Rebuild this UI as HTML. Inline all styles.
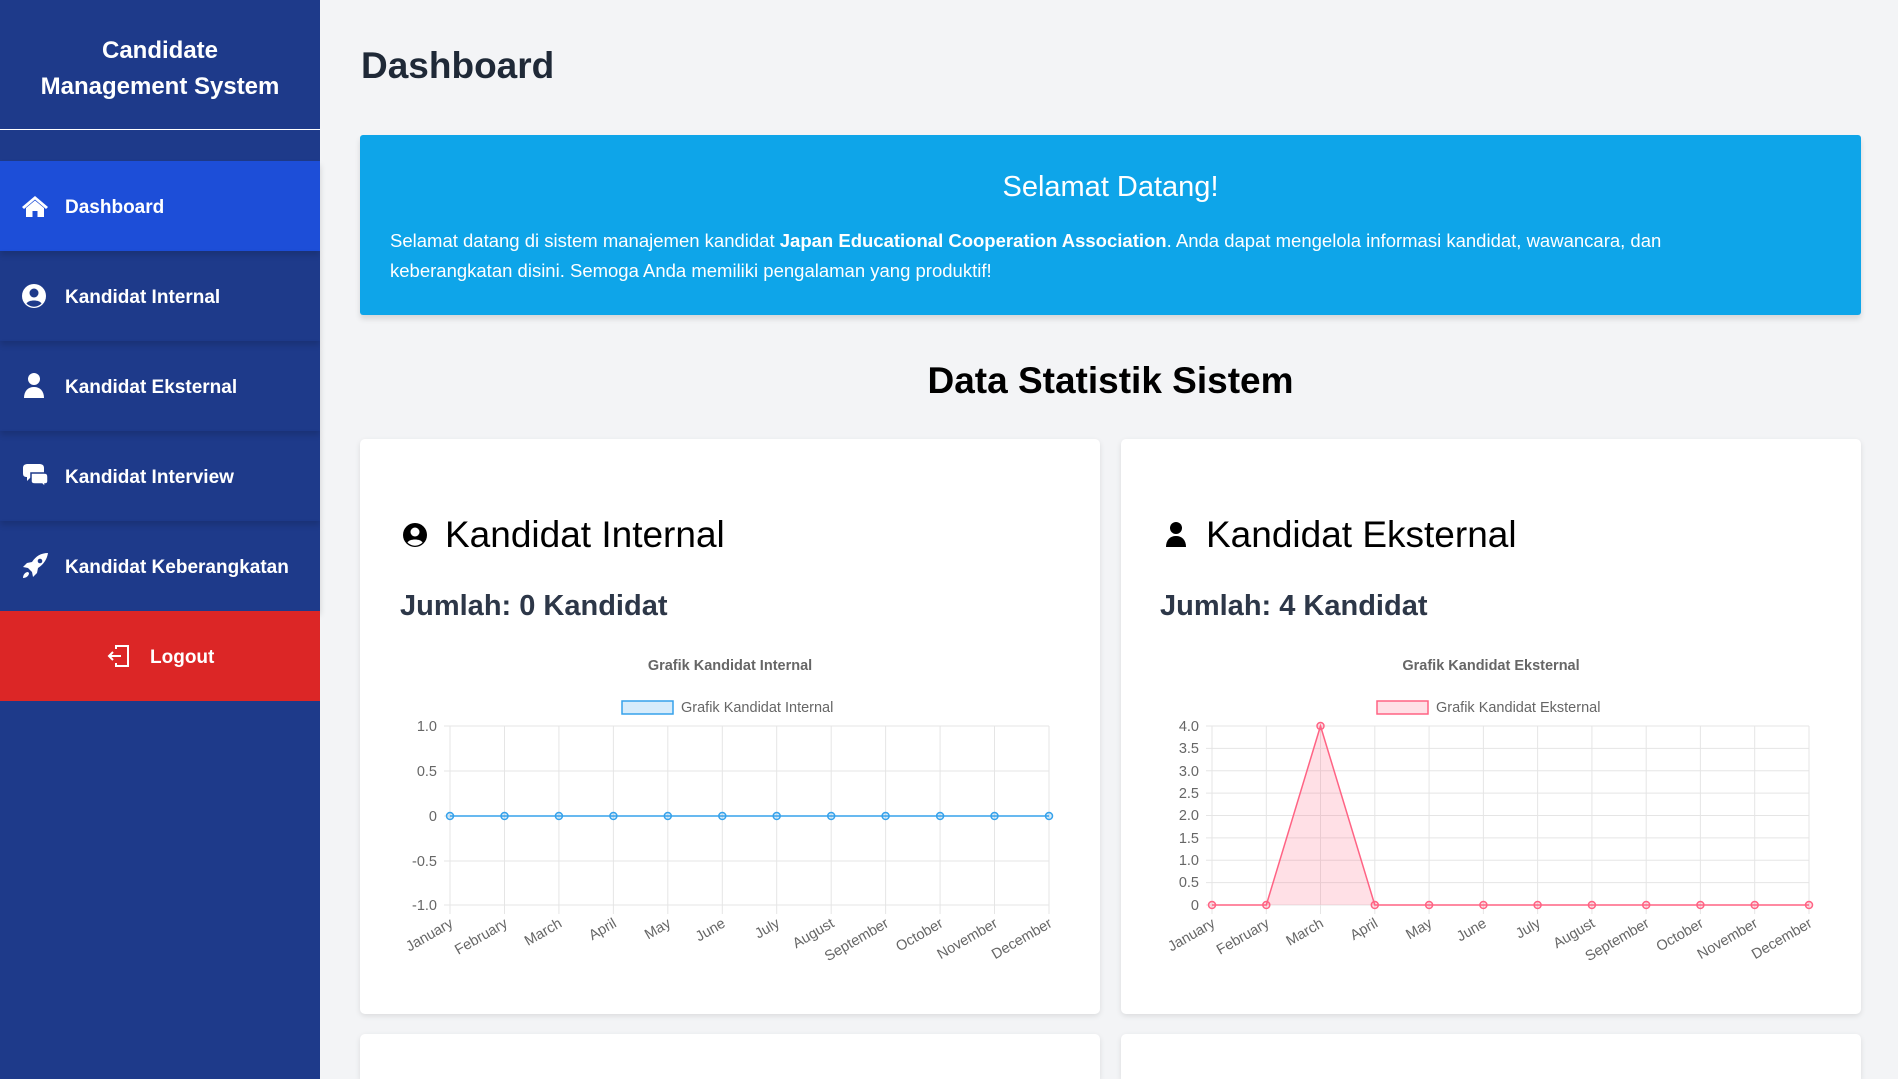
<!DOCTYPE html>
<html><head><meta charset="utf-8"><style>
*{margin:0;padding:0;box-sizing:border-box}
html,body{width:1898px;height:1079px;overflow:hidden}
body{background:#f3f4f6;font-family:"Liberation Sans",sans-serif;position:relative}
.sb{position:absolute;left:0;top:0;width:320px;height:1079px;background:#1e3a8a}
.sb h1{position:absolute;top:33px;left:0;width:320px;text-align:center;color:#fff;font-size:24px;line-height:36px;font-weight:bold}
.div{position:absolute;top:129px;left:0;width:320px;height:1px;background:#fff}
.it{position:absolute;left:0;width:320px;height:90px;display:flex;align-items:center;color:#fff;font-size:19px;font-weight:bold;box-shadow:0 4px 6px rgba(0,0,0,.15)}
.it svg{position:absolute;left:21px}
.it span{position:absolute;left:65px;top:36px}
.a{position:absolute}
</style></head><body>
<div class="sb">
<h1>Candidate<br>Management System</h1>
<div class="div"></div>
<div class="it" style="top:161px;background:#1d4ed8"><svg width="28" height="24" viewBox="0 0 28 24"><path d="M14 2L1 13l2 2 11-9.5L25 15l2-2z" fill="#fff"/><path d="M5 14l9-7.5 9 7.5v9h-6.5v-6h-5v6H5z" fill="#fff"/></svg><span>Dashboard</span></div>
<div class="it" style="top:251px"><svg width="26" height="26" viewBox="0 0 26 26"><circle cx="13" cy="13" r="12" fill="#fff"/><circle cx="13" cy="10" r="4.5" fill="#1e3a8a"/><path d="M5.5 20.5c2-4 13-4 15 0-2 2-5 3.2-7.5 3.2s-5.5-1.2-7.5-3.2z" fill="#1e3a8a"/></svg><span>Kandidat Internal</span></div>
<div class="it" style="top:341px"><svg width="26" height="28" viewBox="0 0 26 28"><circle cx="13" cy="7" r="6" fill="#fff"/><path d="M3 26c0-7 4-11 10-11s10 4 10 11z" fill="#fff"/></svg><span>Kandidat Eksternal</span></div>
<div class="it" style="top:431px"><svg width="28" height="26" viewBox="0 0 28 26"><path d="M2 5c0-3 2-4 5-4h11c3 0 5 1 5 4v5c0 3-2 4-5 4H10l-4 4v-4c-3 0-4-1-4-4z" fill="#fff"/><path d="M10 10h13c3 0 4 1 4 4v4c0 2-1 3-3 3v3l-3-3h-7c-3 0-4-1-4-3z" fill="#fff" stroke="#1e3a8a" stroke-width="1.5"/></svg><span>Kandidat Interview</span></div>
<div class="it" style="top:521px"><svg width="28" height="28" viewBox="0 0 28 28"><path d="M27 1c-7 0-12 3-16 9l-5 1-4 4 5 1 4 4 1 5 4-4 1-5c6-4 9-9 10-15z" fill="#fff"/><circle cx="19" cy="9" r="2.3" fill="#1e3a8a"/><path d="M7 20c-3 0-5 3-5 6 3 0 6-2 6-5z" fill="#fff"/></svg><span>Kandidat Keberangkatan</span></div>
<div class="it" style="top:611px;background:#dc2626;box-shadow:none"><svg style="left:106px" width="26" height="26" viewBox="0 0 26 26" fill="none" stroke="#fff" stroke-width="2"><path d="M10 6V3h12v20H10v-3"/><path d="M15 13H3M7 9l-4 4 4 4"/></svg><span style="left:150px">Logout</span></div>
</div>

<div class="a" style="left:361px;top:45px;font-size:37px;font-weight:bold;color:#1f2937">Dashboard</div>

<div class="a" style="left:360px;top:135px;width:1501px;height:180px;background:#0ea5e9;border-radius:3px;box-shadow:0 4px 6px rgba(0,0,0,.12);color:#fff">
<div style="position:absolute;top:36px;width:100%;text-align:center;font-size:29px">Selamat Datang!</div>
<div style="position:absolute;top:91px;left:30px;right:115px;font-size:18.5px;line-height:30px">Selamat datang di sistem manajemen kandidat <b>Japan Educational Cooperation Association</b>. Anda dapat mengelola informasi kandidat, wawancara, dan keberangkatan disini. Semoga Anda memiliki pengalaman yang produktif!</div>
</div>

<div class="a" style="left:360px;top:360px;width:1501px;text-align:center;font-size:37px;font-weight:bold;color:#000">Data Statistik Sistem</div>

<div class="a" style="left:360px;top:439px;width:740px;height:575px;background:#fff;border-radius:5px;box-shadow:0 2px 6px rgba(0,0,0,.1)"></div>
<div class="a" style="left:1121px;top:439px;width:740px;height:575px;background:#fff;border-radius:5px;box-shadow:0 2px 6px rgba(0,0,0,.1)"></div>
<div class="a" style="left:360px;top:1034px;width:740px;height:45px;background:#fff;border-radius:5px 5px 0 0;box-shadow:0 2px 6px rgba(0,0,0,.1)"></div>
<div class="a" style="left:1121px;top:1034px;width:740px;height:45px;background:#fff;border-radius:5px 5px 0 0;box-shadow:0 2px 6px rgba(0,0,0,.1)"></div>

<svg class="a" style="left:402px;top:522px" width="26" height="26" viewBox="0 0 26 26"><circle cx="13" cy="13" r="12" fill="#000"/><circle cx="13" cy="10" r="4.5" fill="#fff"/><path d="M5.5 20.5c2-4 13-4 15 0-2 2-5 3.2-7.5 3.2s-5.5-1.2-7.5-3.2z" fill="#fff"/></svg>
<div class="a" style="left:445px;top:514px;font-size:37px;color:#000">Kandidat Internal</div>
<div class="a" style="left:400px;top:590px;font-size:29px;font-weight:bold;color:#2d3748">Jumlah: 0 Kandidat</div>

<svg class="a" style="left:1163px;top:521px" width="26" height="28" viewBox="0 0 26 28"><circle cx="13" cy="7" r="6" fill="#000"/><path d="M3 26c0-7 4-11 10-11s10 4 10 11z" fill="#000"/></svg>
<div class="a" style="left:1206px;top:514px;font-size:37px;color:#000">Kandidat Eksternal</div>
<div class="a" style="left:1160px;top:590px;font-size:29px;font-weight:bold;color:#2d3748">Jumlah: 4 Kandidat</div>

<svg class="a" style="left:0;top:0" width="1898" height="1079" font-family="Liberation Sans, sans-serif">
<g font-size="14.5" fill="#666">
<text x="730" y="670" text-anchor="middle" font-weight="bold">Grafik Kandidat Internal</text>
<rect x="622" y="701" width="51" height="13" fill="rgba(54,162,235,0.2)" stroke="#36a2eb" stroke-width="1.5"/>
<text x="681" y="712">Grafik Kandidat Internal</text>
<text x="1491" y="670" text-anchor="middle" font-weight="bold">Grafik Kandidat Eksternal</text>
<rect x="1377" y="701" width="51" height="13" fill="rgba(255,99,132,0.2)" stroke="#ff6384" stroke-width="1.5"/>
<text x="1436" y="712">Grafik Kandidat Eksternal</text>
</g>
<g stroke="#e5e5e5" stroke-width="1">
<path d="M444 726H1049M444 771H1049M444 816H1049M444 861H1049M444 905H1049"/>
<path d="M450 726V914M504.5 726V914M558.9 726V914M613.4 726V914M667.8 726V914M722.3 726V914M776.7 726V914M831.2 726V914M885.6 726V914M940.1 726V914M994.5 726V914M1049 726V914"/>
<path d="M1206 726H1809M1206 748.4H1809M1206 770.8H1809M1206 793.1H1809M1206 815.5H1809M1206 837.9H1809M1206 860.3H1809M1206 882.6H1809M1206 905H1809"/>
<path d="M1212 726V914M1266.3 726V914M1320.5 726V914M1374.8 726V914M1429.1 726V914M1483.4 726V914M1537.6 726V914M1591.9 726V914M1646.2 726V914M1700.4 726V914M1754.7 726V914M1809 726V914"/>
</g>
<g font-size="14.5" fill="#666" text-anchor="end">
<text x="437" y="731">1.0</text><text x="437" y="776">0.5</text><text x="437" y="821">0</text><text x="437" y="866">-0.5</text><text x="437" y="910">-1.0</text>
<text x="1199" y="731">4.0</text><text x="1199" y="753">3.5</text><text x="1199" y="776">3.0</text><text x="1199" y="798">2.5</text><text x="1199" y="820">2.0</text><text x="1199" y="843">1.5</text><text x="1199" y="865">1.0</text><text x="1199" y="887">0.5</text><text x="1199" y="910">0</text>
</g>
<g font-size="14.5" fill="#666" text-anchor="end">
<text transform="translate(454 926) rotate(-30)">January</text>
<text transform="translate(508.5 926) rotate(-30)">February</text>
<text transform="translate(562.9 926) rotate(-30)">March</text>
<text transform="translate(617.4 926) rotate(-30)">April</text>
<text transform="translate(671.8 926) rotate(-30)">May</text>
<text transform="translate(726.3 926) rotate(-30)">June</text>
<text transform="translate(780.7 926) rotate(-30)">July</text>
<text transform="translate(835.2 926) rotate(-30)">August</text>
<text transform="translate(889.6 926) rotate(-30)">September</text>
<text transform="translate(944.1 926) rotate(-30)">October</text>
<text transform="translate(998.5 926) rotate(-30)">November</text>
<text transform="translate(1053 926) rotate(-30)">December</text>
<text transform="translate(1216 926) rotate(-30)">January</text>
<text transform="translate(1270.3 926) rotate(-30)">February</text>
<text transform="translate(1324.5 926) rotate(-30)">March</text>
<text transform="translate(1378.8 926) rotate(-30)">April</text>
<text transform="translate(1433.1 926) rotate(-30)">May</text>
<text transform="translate(1487.4 926) rotate(-30)">June</text>
<text transform="translate(1541.6 926) rotate(-30)">July</text>
<text transform="translate(1595.9 926) rotate(-30)">August</text>
<text transform="translate(1650.2 926) rotate(-30)">September</text>
<text transform="translate(1704.4 926) rotate(-30)">October</text>
<text transform="translate(1758.7 926) rotate(-30)">November</text>
<text transform="translate(1813 926) rotate(-30)">December</text>
</g>
<path d="M450 816H1049" stroke="#36a2eb" stroke-width="1.5"/>
<g fill="rgba(54,162,235,0.2)" stroke="#36a2eb" stroke-width="1.5">
<circle cx="450" cy="816" r="3.5"/><circle cx="504.5" cy="816" r="3.5"/><circle cx="558.9" cy="816" r="3.5"/><circle cx="613.4" cy="816" r="3.5"/><circle cx="667.8" cy="816" r="3.5"/><circle cx="722.3" cy="816" r="3.5"/><circle cx="776.7" cy="816" r="3.5"/><circle cx="831.2" cy="816" r="3.5"/><circle cx="885.6" cy="816" r="3.5"/><circle cx="940.1" cy="816" r="3.5"/><circle cx="994.5" cy="816" r="3.5"/><circle cx="1049" cy="816" r="3.5"/>
</g>
<path d="M1266.3 905L1320.5 726L1374.8 905Z" fill="rgba(255,99,132,0.2)"/>
<path d="M1212 905H1266.3L1320.5 726L1374.8 905H1809" fill="none" stroke="#ff6384" stroke-width="1.5"/>
<g fill="rgba(255,99,132,0.2)" stroke="#ff6384" stroke-width="1.5">
<circle cx="1212" cy="905" r="3.5"/><circle cx="1266.3" cy="905" r="3.5"/><circle cx="1320.5" cy="726" r="3.5"/><circle cx="1374.8" cy="905" r="3.5"/><circle cx="1429.1" cy="905" r="3.5"/><circle cx="1483.4" cy="905" r="3.5"/><circle cx="1537.6" cy="905" r="3.5"/><circle cx="1591.9" cy="905" r="3.5"/><circle cx="1646.2" cy="905" r="3.5"/><circle cx="1700.4" cy="905" r="3.5"/><circle cx="1754.7" cy="905" r="3.5"/><circle cx="1809" cy="905" r="3.5"/>
</g>
</svg>
</body></html>
